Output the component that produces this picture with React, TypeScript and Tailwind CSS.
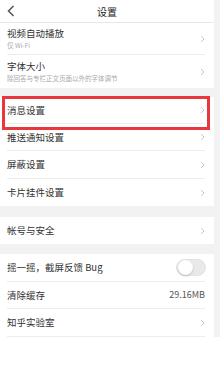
import React from 'react';

const font = { fontFamily: '"Noto Sans CJK SC", "Noto Sans", sans-serif' };

const Chevron = () => (
  <svg width="5" height="8" viewBox="0 0 5 8" className="shrink-0">
    <path d="M1 1l3 3-3 3" fill="none" stroke="#c7c7cc" strokeWidth="1" />
  </svg>
);

interface RowProps {
  title: string;
  subtitle?: string;
  right?: React.ReactNode;
  last?: boolean;
  h: string;
}

const Row: React.FC<RowProps> = ({ title, subtitle, right, last, h }) => (
  <div className={`flex items-center pl-[7px] pr-[9px] bg-white ${h}`}>
    <div className={`flex-1 flex items-center h-full ${last ? '' : 'border-b border-[#ececec]'}`}>
      <div className="flex-1 min-w-0 flex flex-col justify-center">
        <span className="text-[9.5px] leading-[13px] text-[#333]">{title}</span>
        {subtitle && (
          <span className="text-[6.5px] leading-[9px] text-[#aaa] mt-[1px]">{subtitle}</span>
        )}
      </div>
      {right ?? <Chevron />}
    </div>
  </div>
);

const Gap = ({ h }: { h: string }) => <div className={`bg-[#f2f2f2] ${h}`} />;

const Toggle = () => (
  <div className="w-[30px] h-[17px] rounded-full bg-[#e9e9e9] border border-[#e3e3e3] flex items-center px-[1px] mr-[-1px]">
    <div className="w-[15px] h-[15px] rounded-full bg-white shadow-[0_1px_2px_rgba(0,0,0,0.2)]" />
  </div>
);

export default function App() {
  return (
    <div className="w-[220px] h-[380px] bg-white overflow-hidden" style={font}>
      <div className="flex">
        <div className="w-[214px] relative">
          <div className="h-[23px] flex items-center justify-center relative border-b border-[#e8e8e8]">
            <svg width="8" height="12" viewBox="0 0 8 12" className="absolute left-[7px] top-[5px]">
              <path d="M6.5 1L1.5 6l5 5" fill="none" stroke="#555" strokeWidth="1.5" />
            </svg>
            <span className="text-[10px] text-[#222]">设置</span>
          </div>
          <Row h="h-[32px]" title="视频自动播放" subtitle="仅 Wi-Fi" />
          <Row h="h-[33px]" title="字体大小" subtitle="除回答与专栏正文页面以外的字体调节" last />
          <Gap h="h-[9px]" />
          <Row h="h-[27px]" title="消息设置" />
          <Row h="h-[27px]" title="推送通知设置" />
          <Row h="h-[28px]" title="屏蔽设置" />
          <Row h="h-[27px]" title="卡片挂件设置" last />
          <Gap h="h-[11px]" />
          <Row h="h-[27px]" title="帐号与安全" last />
          <Gap h="h-[10px]" />
          <Row h="h-[28px]" title="摇一摇，截屏反馈 Bug" right={<Toggle />} />
          <Row
            h="h-[27px]"
            title="清除缓存"
            right={<span className="text-[9px] text-[#555]">29.16MB</span>}
          />
          <Row h="h-[28px]" title="知乎实验室" />
          <div className="absolute left-[2px] top-[96px] w-[208px] h-[34px] border-[3px] border-[#e8383d]" />
        </div>
        <div className="flex-1 bg-[#f2f2f2]" />
      </div>
    </div>
  );
}
